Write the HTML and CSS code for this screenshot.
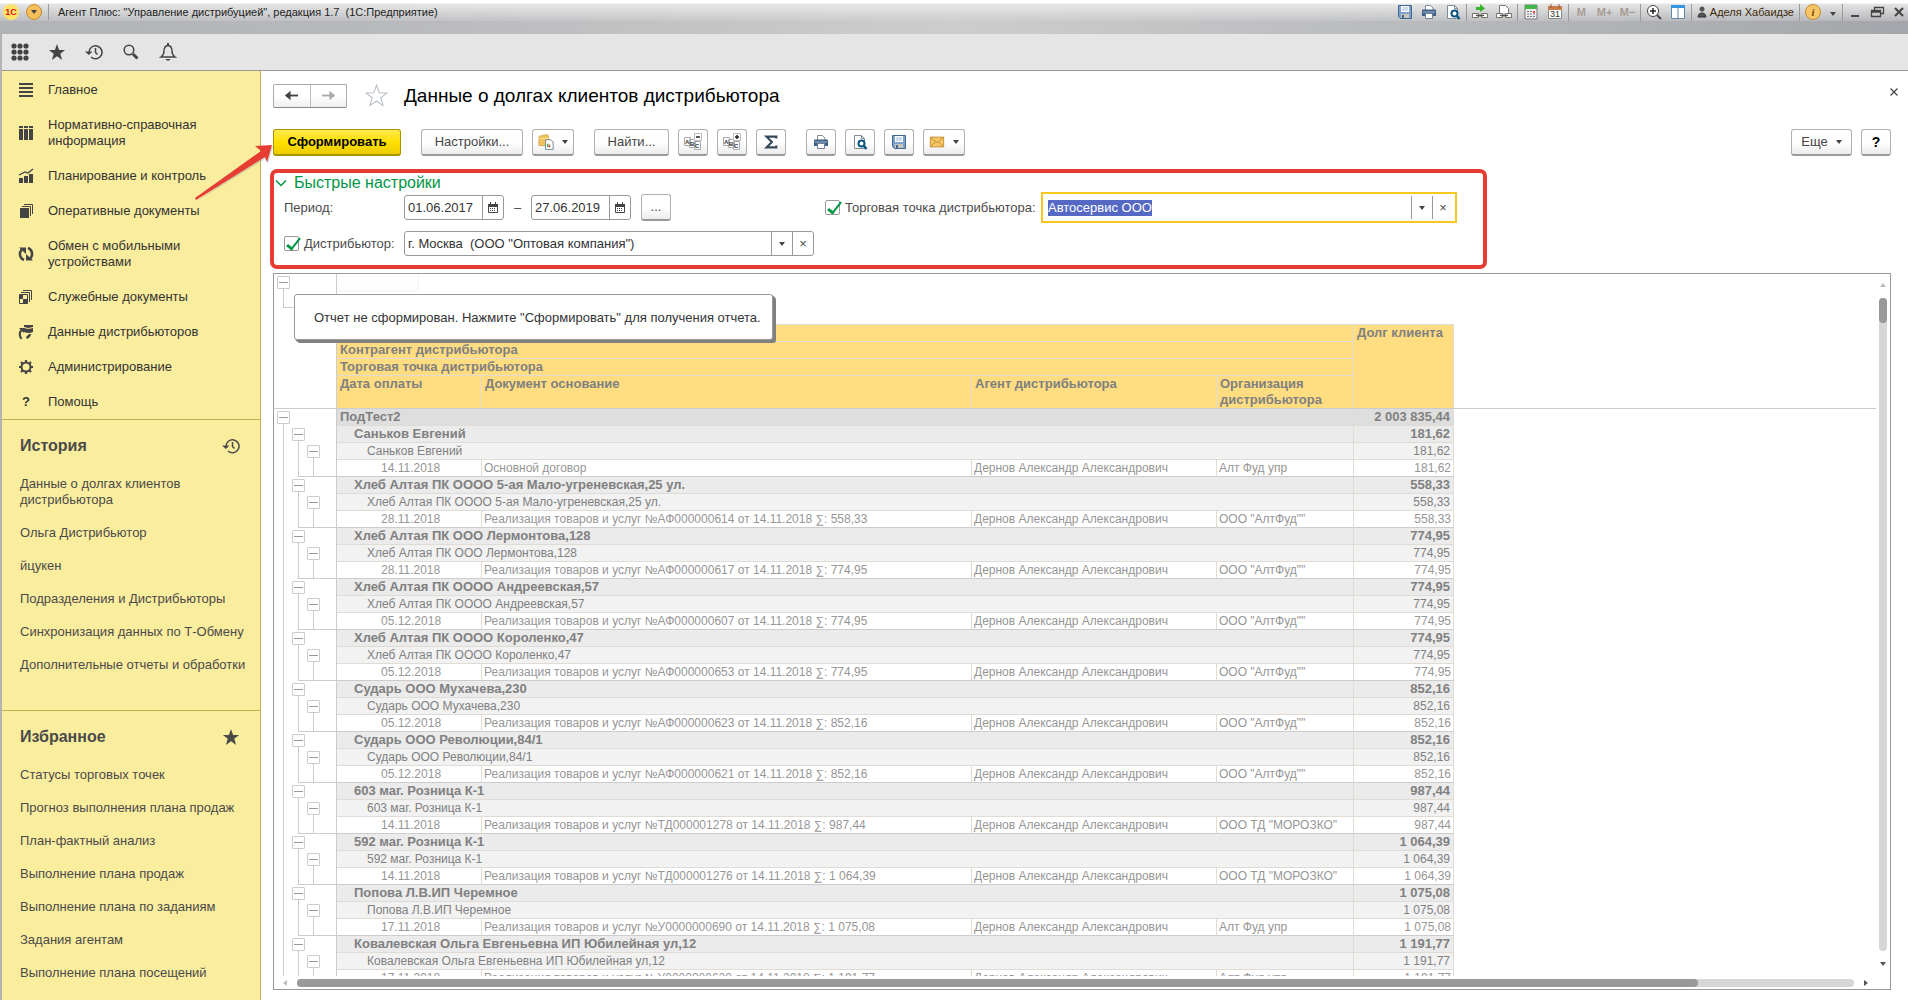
FILE: index.html
```
<!DOCTYPE html>
<html lang="ru">
<head>
  <meta charset="UTF-8">
  <title>Агент Плюс: Управление дистрибуцией</title>
  <link rel="stylesheet" href="styles.css">
</head>
<body>
  <!-- Shared icons -->
  <svg class="sprite" width="0" height="0" aria-hidden="true">
    <symbol id="i-save" viewBox="0 0 16 16">
      <path d="M1.500 1.500h13v13h-11l-2-2z" fill="#7da3cc" stroke="#3f6791"/>
      <path d="M4 2h8v6H4z" fill="#fff"/><path d="M5 4h6M5 6h6" stroke="#9db7d2"/>
      <path d="M4 10h8v4H4z" fill="#c9c5bd"/><path d="M5 11h2v3H5z" fill="#3f6791"/>
    </symbol>
    <symbol id="i-print" viewBox="0 0 16 16">
      <path d="M4.500 7V1.500h5l2.500 2.500v3" fill="#fff" stroke="#7f8b97"/>
      <path d="M1 6.500q0-1 1-1h12q1 0 1 1V12H1z" fill="#3f6286"/>
      <path d="M2 8h12" stroke="#9fb6cc"/>
      <path d="M4.500 9.500h7v5h-7z" fill="#fff" stroke="#6d8199"/>
    </symbol>
    <symbol id="i-preview" viewBox="0 0 16 16">
      <path d="M2.500 1.500h7l3 3v10h-10z" fill="#fff" stroke="#7f8b97"/><path d="M9.500 1.500v3h3" fill="none" stroke="#7f8b97"/>
      <circle cx="9.500" cy="9.500" r="3" fill="#fff" stroke="#0d5480" stroke-width="2"/>
      <path d="M11.500 11.500l3 3.500" stroke="#0d5480" stroke-width="2.500"/>
    </symbol>
    <symbol id="i-link" viewBox="0 0 16 16">
      <path d="M.5 9.500h6v4h-6zM9.500 9.500h6v4h-6z" fill="#fff" stroke="#77736f"/>
      <path d="M4 11.500h8" stroke="#55514d" stroke-width="1.500"/>
    </symbol>
    <symbol id="i-history" viewBox="0 0 18 18">
      <path d="M4 9.500a6.500 6.500 0 1 1 2 4.500" fill="none" stroke="currentColor" stroke-width="1.500"/>
      <path d="M0 8.500h7.500L3.800 12z" fill="currentColor"/>
      <path d="M10.500 5v4.500l2 2" fill="none" stroke="currentColor" stroke-width="1.500"/>
    </symbol>
    <symbol id="i-star" viewBox="0 0 18 18">
      <path d="M9 1l2.100 5.900 6 .2-4.800 3.700 1.800 6.100L9 13.300l-5.100 3.600 1.800-6.100L.9 7.100l6-.2z"/>
    </symbol>
    <symbol id="i-cal" viewBox="0 0 12 12">
      <path d="M1.500 2.500h9v8h-9z" fill="none" stroke="#444"/><path d="M1 2h10v3H1zM3 0h1v3H3zM8 0h1v3H8z" fill="#444"/>
      <path d="M3 6.500h6M3 8.500h6" stroke="#444" stroke-dasharray="1 1"/>
    </symbol>
    <symbol id="i-pages" viewBox="0 0 18 18">
      <path d="M.5 4.500h6v8h-6zM5.500 6.500h6v8h-6zM10.500 8.500h6v8h-6z" fill="#fff" stroke="#aaa"/>
      <path d="M10.500.5h7v7h-7z" fill="#fff" stroke="#bbb"/>
    </symbol>
  </svg>

  <header class="titlebar">
    <span class="logo">1С</span>
    <button class="app-menu" aria-label="Меню"><i class="caret"></i></button>
    <span class="title-text">Агент Плюс: "Управление дистрибуцией", редакция 1.7&nbsp; (1С:Предприятие)</span>
    <nav class="title-tools">
      <button aria-label="Сохранить"><svg><use href="#i-save"/></svg></button>
      <button aria-label="Печать"><svg><use href="#i-print"/></svg></button>
      <button aria-label="Просмотр"><svg><use href="#i-preview"/></svg></button>
      <i class="sep"></i>
      <button aria-label="Получить ссылку"><svg viewBox="0 0 16 16"><use href="#i-link" width="16" height="16"/><path d="M4 3h4V0l5 4.500L8 8V6H4z" fill="#35b52a"/></svg></button>
      <button aria-label="Перейти по ссылке"><svg viewBox="0 0 16 16"><path d="M3.500 9V1.500h6l3 3V9" fill="#fff" stroke="#777"/><use href="#i-link" width="16" height="16"/></svg></button>
      <i class="sep"></i>
      <button aria-label="Калькулятор"><svg viewBox="0 0 16 16"><path d="M2 1h12v14H2z" fill="#eee" stroke="#777"/><path d="M2 1h12v4H2z" fill="#42b649"/><path d="M4 7.500h8M4 10h8M4 12.500h8" stroke="#777" stroke-dasharray="2 1"/><path d="M10 7h2v2h-2z" fill="#e44"/></svg></button>
      <button aria-label="Календарь"><svg viewBox="0 0 16 16"><path d="M1.500 2.500h13v12h-13z" fill="#fff" stroke="#888"/><path d="M1 2h14v4H1z" fill="#c87c4c"/><path d="M4 0v4M12 0v4" stroke="#8c5a3c"/><text x="3" y="13" font-family="Liberation Sans" font-size="9" fill="#333">31</text></svg></button>
      <i class="sep"></i>
      <button class="mem" disabled>M</button>
      <button class="mem" disabled>M+</button>
      <button class="mem" disabled>M−</button>
      <i class="sep"></i>
      <button aria-label="Масштаб"><svg viewBox="0 0 16 16"><circle cx="7" cy="7" r="5.500" fill="#fff" stroke="#444"/><path d="M7 4v6M4 7h6" stroke="#222" stroke-width="1.500"/><path d="M11 11l4 4" stroke="#444" stroke-width="2"/></svg></button>
      <button aria-label="Панели"><svg viewBox="0 0 16 16"><path d="M1.500 1.500h13v13h-13z" fill="#fff" stroke="#5e87a8"/><path d="M1 1h14v3H1z" fill="#3395e0"/><path d="M8 4v11" stroke="#5e87a8"/></svg></button>
      <i class="sep"></i>
      <span class="user"><svg viewBox="0 0 10 12"><circle cx="5" cy="3" r="2.500" fill="#555"/><path d="M1 11q0-3 3-4h2q3 1 3 4z" fill="#555" stroke="#333"/></svg>Аделя Хабаидзе</span>
      <i class="sep"></i>
      <button class="info" aria-label="О программе">i</button>
      <button class="win arrow" aria-label="Ещё"><i class="caret"></i></button>
      <i class="sep"></i>
      <button class="win" aria-label="Свернуть"><svg viewBox="0 0 16 16"><path d="M4 12h8" stroke="#444" stroke-width="2"/></svg></button>
      <button class="win" aria-label="Восстановить"><svg viewBox="0 0 16 16"><path d="M5.500 6V3.500h9v6H12M2.500 6.500h9v6h-9zM2 8h10" fill="none" stroke="#444" stroke-width="1.300"/></svg></button>
      <button class="win" aria-label="Закрыть"><svg viewBox="0 0 16 16"><path d="M4 4l8 8M12 4l-8 8" stroke="#444" stroke-width="2"/></svg></button>
    </nav>
  </header>

  <div class="window">
    <div class="topbar">
      <button aria-label="Разделы"><svg viewBox="0 0 18 18" fill="#444"><circle cx="3" cy="3" r="2.600"/><circle cx="9" cy="3" r="2.600"/><circle cx="15" cy="3" r="2.600"/><circle cx="3" cy="9" r="2.600"/><circle cx="9" cy="9" r="2.600"/><circle cx="15" cy="9" r="2.600"/><circle cx="3" cy="15" r="2.600"/><circle cx="9" cy="15" r="2.600"/><circle cx="15" cy="15" r="2.600"/></svg></button>
      <button aria-label="Избранное"><svg fill="#444"><use href="#i-star"/></svg></button>
      <button aria-label="История"><svg><use href="#i-history"/></svg></button>
      <button aria-label="Поиск"><svg viewBox="0 0 18 18"><circle cx="7" cy="7" r="4.800" fill="none" stroke="#444" stroke-width="1.500"/><path d="M11 11l4.500 4.500" stroke="#444" stroke-width="3"/></svg></button>
      <button aria-label="Оповещения"><svg viewBox="0 0 18 18"><path d="M2 14h14q-3-2-3-6 0-5-4-5.500Q5 3 5 8q0 4-3 6z" fill="none" stroke="#444" stroke-width="1.400"/><path d="M9 0v3" stroke="#444" stroke-width="2"/><path d="M6.500 16h5l-1 1.500h-3z" fill="#444"/></svg></button>
    </div>

    <div class="workspace">
      <aside class="sidebar">
        <nav class="sections">
          <a href="#"><svg viewBox="0 0 16 16"><path d="M1 2h14M1 6h14M1 10h14M1 14h14" stroke="#444" stroke-width="2"/></svg>Главное</a>
          <a href="#"><svg viewBox="0 0 16 16"><path d="M1 1h4v2H1zM6 1h4v2H6zM11 1h4v2h-4zM1 4h4v11H1zM6 4h4v11H6zM11 4h4v11h-4z" fill="#444"/></svg>Нормативно-справочная информация</a>
          <a href="#"><svg viewBox="0 0 16 16"><path d="M1 10h4v5H1zM6 8h4v7H6zM11 6h4v9h-4z" fill="#444"/><path d="M1 7l6-3 3 1 5-4" fill="none" stroke="#444" stroke-width="1.300"/></svg>Планирование и контроль</a>
          <a href="#"><svg viewBox="0 0 16 16"><path d="M2 5h9v10H2z" fill="#444"/><path d="M4 3.500h8.500V13M6 1.500h8.500V11" fill="none" stroke="#444"/></svg>Оперативные документы</a>
          <a href="#"><svg viewBox="0 0 16 16"><path d="M6 14Q1.500 12 2 7q.3-2 2-3.500M10 2q4.500 2 4 7-.3 2-2 3.500" fill="none" stroke="#444" stroke-width="2.500"/><path d="M1 1.500h7V8zM15 14.500H8V8z" fill="#444"/></svg>Обмен с мобильными устройствами</a>
          <a href="#"><svg viewBox="0 0 16 16"><path d="M1.500 5.500h8v9h-8z" fill="none" stroke="#444"/><path d="M2 6h3v4H2zM5 10h4v4H5z" fill="#444"/><path d="M3 3.500h8.500V13M5 1.500h8.500V11" fill="none" stroke="#444"/></svg>Служебные документы</a>
          <a href="#"><svg viewBox="0 0 16 16"><path d="M6 1h9v7q-4 2-9 0z" fill="#444"/><path d="M6 3.500q4 2 9 0" fill="none" stroke="#fbed9e"/><path d="M3.500 15Q0 10 3.500 6" fill="none" stroke="#444" stroke-width="2"/><path d="M1 4h5v5zM13 10q0 3-4 5l-1-2 3-3z" fill="#444"/></svg>Данные дистрибьюторов</a>
          <a href="#"><svg viewBox="0 0 16 16"><circle cx="8" cy="8" r="4.500" fill="none" stroke="#444" stroke-width="2"/><path d="M8 1v2M8 13v2M1 8h2M13 8h2M3 3l1.500 1.500M11.500 11.500L13 13M13 3l-1.500 1.500M4.500 11.500L3 13" stroke="#444" stroke-width="2.200"/></svg>Администрирование</a>
          <a href="#"><b class="q">?</b>Помощь</a>
        </nav>
        <section class="side-block history">
          <h2>История <svg><use href="#i-history"/></svg></h2>
          <a href="#">Данные о долгах клиентов дистрибьютора</a>
          <a href="#">Ольга Дистрибьютор</a>
          <a href="#">йцукен</a>
          <a href="#">Подразделения и Дистрибьюторы</a>
          <a href="#">Синхронизация данных по Т-Обмену</a>
          <a href="#">Дополнительные отчеты и обработки</a>
        </section>
        <section class="side-block">
          <h2>Избранное <svg fill="#4a4a4a"><use href="#i-star"/></svg></h2>
          <a href="#">Статусы торговых точек</a>
          <a href="#">Прогноз выполнения плана продаж</a>
          <a href="#">План-фактный анализ</a>
          <a href="#">Выполнение плана продаж</a>
          <a href="#">Выполнение плана по заданиям</a>
          <a href="#">Задания агентам</a>
          <a href="#">Выполнение плана посещений</a>
        </section>
      </aside>

      <main>
        <div class="form-head">
          <div class="nav-btns">
            <button aria-label="Назад"><svg viewBox="0 0 16 16"><path d="M2 8h13" stroke="#444" stroke-width="2"/><path d="M1 8l6-5v10z" fill="#444"/></svg></button>
            <button aria-label="Вперед"><svg viewBox="0 0 16 16"><path d="M1 8h13" stroke="#aaa" stroke-width="2"/><path d="M15 8L9 3v10z" fill="#aaa"/></svg></button>
          </div>
          <button class="fav" aria-label="В избранное"><svg viewBox="0 0 18 18" fill="#fff" stroke="#b4bac2" stroke-width=".8"><use href="#i-star"/></svg></button>
          <h1>Данные о долгах клиентов дистрибьютора</h1>
          <button class="close" aria-label="Закрыть"><svg viewBox="0 0 10 10"><path d="M1.500 1.500l7 7M8.500 1.500l-7 7" stroke="#444" stroke-width="1.200"/></svg></button>
        </div>

        <div class="commands">
          <button class="btn primary">Сформировать</button>
          <button class="btn text-btn first">Настройки...</button>
          <button class="btn drop" aria-label="Варианты"><svg viewBox="0 0 18 18"><path d="M1 4q0-2 2-2h2l1-1h5l1 2v10H1z" fill="#f0c25c" stroke="#c99b3c" stroke-width=".8"/><path d="M1 5h11" stroke="#fae3a4"/><path d="M8.500 6.500h6l2.500 2.500v8.500H8.500z" fill="#fff" stroke="#6c8094"/><path d="M11 11v4" stroke="#3a3" stroke-width="1.500"/><path d="M13 12v3" stroke="#d33" stroke-width="1.500"/></svg><i class="caret"></i></button>
          <button class="btn text-btn find first">Найти...</button>
          <button class="btn icon abc" aria-label="Свернуть группы"><svg viewBox="0 0 18 18"><use href="#i-pages" width="18" height="18"/><text x="1" y="11">A</text><text x="6" y="13">B</text><text x="11" y="15">C</text><path d="M12 4h4" stroke="#222" stroke-width="1.500"/></svg></button>
          <button class="btn icon abc" aria-label="Развернуть группы"><svg viewBox="0 0 18 18"><use href="#i-pages" width="18" height="18"/><text x="1" y="11">A</text><text x="6" y="13">B</text><text x="11" y="15">C</text><path d="M12 4h4M14 2v4" stroke="#222" stroke-width="1.500"/></svg></button>
          <button class="btn icon" aria-label="Сумма"><svg viewBox="0 0 18 18"><path d="M15 5V3H4l6 6-6 6h11v-2" fill="none" stroke="#34495a" stroke-width="2.400"/></svg></button>
          <button class="btn icon first" aria-label="Печать"><svg><use href="#i-print"/></svg></button>
          <button class="btn icon" aria-label="Предварительный просмотр"><svg><use href="#i-preview"/></svg></button>
          <button class="btn icon" aria-label="Сохранить"><svg><use href="#i-save"/></svg></button>
          <button class="btn drop" aria-label="Отправить"><svg viewBox="0 0 18 18"><path d="M1.500 3.500h15v11h-15z" fill="#f6c765" stroke="#bf862b"/><path d="M2 4l7 6 7-6M2 14l5-5M16 14l-5-5" fill="none" stroke="#bf862b"/></svg><i class="caret"></i></button>
          <button class="btn more">Еще <i class="caret"></i></button>
          <button class="btn icon help">?</button>
        </div>

        <section class="quick">
          <h3><svg viewBox="0 0 12 8"><path d="M1 1.500l5 5 5-5" fill="none" stroke="#009646" stroke-width="1.500"/></svg>Быстрые настройки</h3>
          <div class="quick-grid">
            <div class="field">
              <label class="l-name" for="from">Период:</label>
              <span class="input date"><input type="text" id="from" value="01.06.2017"><button aria-label="Выбрать дату"><svg><use href="#i-cal"/></svg></button></span>
              <span class="dash">–</span>
              <span class="input date"><input type="text" aria-label="Конец периода" value="27.06.2019"><button aria-label="Выбрать дату"><svg><use href="#i-cal"/></svg></button></span>
              <button class="btn icon dots">...</button>
            </div>
            <div class="field">
              <span class="l-point"><input type="checkbox" id="use-point" checked><label for="use-point">Торговая точка дистрибьютора:</label></span>
              <span class="input focus"><input type="text" id="point" aria-label="Торговая точка" value="Автосервис ООО"><button aria-label="Список"><i class="caret"></i></button><button aria-label="Очистить">×</button></span>
            </div>
            <div class="field">
              <span class="l-name"><input type="checkbox" id="use-dist" checked><label for="use-dist">Дистрибьютор:</label></span>
              <span class="input wide"><input type="text" aria-label="Дистрибьютор" value="г. Москва  (ООО &quot;Оптовая компания&quot;)"><button aria-label="Список"><i class="caret"></i></button><button aria-label="Очистить">×</button></span>
            </div>
          </div>
        </section>

        <section class="report">
          <div class="sheet">
            <table>
              <colgroup>
                <col class="c-tree"><col class="c-date"><col class="c-doc"><col class="c-agent"><col class="c-org"><col class="c-sum"><col>
              </colgroup>
              <thead>
                <tr class="spacer"><td class="tree"><div class="tree-in"><span class="lv open"><button aria-label="Свернуть"></button></span></div></td><td colspan="5"><div class="blank-cell"></div></td><td></td></tr>
                <tr class="h"><td class="tree" rowspan="4"></td><th class="top" colspan="4">&nbsp;</th><th class="top sum-h" rowspan="4">Долг клиента</th><td class="rest" rowspan="4"></td></tr>
                <tr class="h"><th colspan="4">Контрагент дистрибьютора</th></tr>
                <tr class="h"><th colspan="4">Торговая точка дистрибьютора</th></tr>
                <tr class="h last"><th>Дата оплаты</th><th>Документ основание</th><th>Агент дистрибьютора</th><th>Организация дистрибьютора</th></tr>
              </thead>
              <tbody id="rows"></tbody>
            </table>
          </div>
          <div class="vbar"><i class="up"></i><div class="track"><div class="thumb"></div></div><i class="down"></i></div>
          <div class="hbar"><i class="left"></i><div class="track"><div class="thumb"></div></div><i class="right"></i></div>
          <div class="message">Отчет не сформирован. Нажмите "Сформировать" для получения отчета.</div>
        </section>
      </main>

      <!-- Pointer to the main button -->
      <svg class="pointer" viewBox="0 0 82 64"><path d="M5 60L73 18l3 5 5-18z" fill="#999" opacity=".4"/><path d="M3 57L69 10l-6-5 17-1-5 17-2-5L4 59z" fill="#e63c32"/></svg>
    </div>
  </div>

  <script>
    // name, date, document, organization, amount
    const agent = 'Дернов Александр Александрович';
    const sale = (num, sum) => 'Реализация товаров и услуг №' + num + ' от 14.11.2018 ∑: ' + sum;
    const groups = [
      ['Саньков Евгений', '14.11.2018', 'Основной договор', 'Алт Фуд упр', '181,62'],
      ['Хлеб Алтая ПК ОООО 5-ая Мало-угреневская,25 ул.', '28.11.2018', sale('АФ000000614', '558,33'), 'ООО "АлтФуд""', '558,33'],
      ['Хлеб Алтая ПК ООО Лермонтова,128', '28.11.2018', sale('АФ000000617', '774,95'), 'ООО "АлтФуд""', '774,95'],
      ['Хлеб Алтая ПК ОООО Андреевская,57', '05.12.2018', sale('АФ000000607', '774,95'), 'ООО "АлтФуд""', '774,95'],
      ['Хлеб Алтая ПК ОООО Короленко,47', '05.12.2018', sale('АФ000000653', '774,95'), 'ООО "АлтФуд""', '774,95'],
      ['Сударь ООО Мухачева,230', '05.12.2018', sale('АФ000000623', '852,16'), 'ООО "АлтФуд""', '852,16'],
      ['Сударь ООО Революции,84/1', '05.12.2018', sale('АФ000000621', '852,16'), 'ООО "АлтФуд""', '852,16'],
      ['603 маг. Розница К-1', '14.11.2018', sale('ТД000001278', '987,44'), 'ООО ТД "МОРОЗКО"', '987,44'],
      ['592 маг. Розница К-1', '14.11.2018', sale('ТД000001276', '1 064,39'), 'ООО ТД "МОРОЗКО"', '1 064,39'],
      ['Попова Л.В.ИП Черемное', '17.11.2018', sale('У0000000690', '1 075,08'), 'Алт Фуд упр', '1 075,08'],
      ['Ковалевская Ольга Евгеньевна ИП Юбилейная ул,12', '17.11.2018', sale('У0000000620', '1 191,77'), 'Алт Фуд упр', '1 191,77']
    ];

    const open = '<span class="lv open"><button aria-label="Свернуть"></button></span>';
    const line = '<span class="lv line"></span>';
    const tree = cells => '<td class="tree"><div class="tree-in">' + cells + '</div></td>';

    let html = '<tr class="total">' + tree(open) + '<td colspan="4">ПодТест2</td><td class="num">2 003 835,44</td><td class="rest"></td></tr>';
    groups.forEach(([name, date, doc, org, sum]) => {
      const num = '<td class="num">' + sum + '</td><td class="rest"></td></tr>';
      html += '<tr class="group">' + tree(line + open) + '<td colspan="4">' + name + '</td>' + num;
      html += '<tr class="sub">' + tree(line + line + open) + '<td colspan="4">' + name + '</td>' + num;
      html += '<tr class="row">' + tree(line + '<span class="lv line end"></span>' + line) +
        '<td class="date">' + date + '</td><td>' + doc + '</td><td>' + agent + '</td><td>' + org + '</td>' + num;
    });
    document.getElementById('rows').innerHTML = html;

    const point = document.getElementById('point');
    point.focus();
    point.select();
  </script>
</body>
</html>
```
FILE: styles.css
```
* {
  box-sizing: border-box;
}
body {
  margin: 0;
  height: 100vh;
  display: flex;
  flex-direction: column;
  overflow: hidden;
  background: linear-gradient(90deg, #b2b3b7, #b8b9bb 20%, #cdcdcd 50%, #bcbdbf 70%, #a5a6ab);
  color: #333;
  font: 13px/16px "Liberation Sans", Arial, sans-serif;
}
button {
  margin: 0;
  padding: 0;
  border: none;
  background: none;
  color: inherit;
  font: inherit;
}
a {
  color: inherit;
  text-decoration: none;
}
h1, h2, h3 {
  margin: 0;
}
svg {
  display: block;
  flex: none;
}
.sprite {
  position: absolute;
}
.caret {
  display: inline-block;
  border: 3px solid transparent;
  border-top: 4px solid #444;
  border-bottom: none;
}

/* Title bar */
.titlebar {
  display: flex;
  align-items: center;
  height: 21px;
  margin-bottom: 13px;
  padding: 3px 2px 0 3px;
  background: linear-gradient(#fff, #fff 3px, rgba(235, 235, 235, 0.9) 4px, rgba(205, 206, 208, 0.4));
  color: #222;
  font-size: 11px;
}
.logo {
  width: 16px;
  height: 16px;
  border-radius: 50%;
  background: #fbe36a;
  color: #d6161c;
  font: bold 9px/16px "Liberation Sans", sans-serif;
  text-align: center;
}
.app-menu {
  display: flex;
  align-items: center;
  justify-content: center;
  width: 16px;
  height: 16px;
  margin: 0 6px 0 7px;
  border: 1px solid #c48b2e;
  border-radius: 50%;
  background: #f7c05c;
}
.title-text {
  padding-left: 9px;
  border-left: 1px solid #999;
}
.title-tools {
  display: flex;
  align-items: center;
  gap: 8px;
  margin-left: auto;
}
.title-tools svg {
  width: 16px;
  height: 16px;
}
.sep {
  width: 1px;
  height: 17px;
  margin: 0 -3px;
  background: #999;
}
.title-tools .mem {
  width: 15px;
  color: #a89c96;
  font-weight: bold;
}
.user {
  display: flex;
  align-items: center;
  gap: 3px;
  color: #3c2a08;
}
.title-tools .user svg {
  width: 10px;
  height: 12px;
}
.info {
  width: 16px;
  height: 16px;
  border: 1px solid #c48b2e;
  border-radius: 50%;
  background: #f6c668;
  color: #7a4d00;
  font: italic bold 11px/14px "Liberation Serif", serif;
}
.title-tools .win {
  display: flex;
  justify-content: center;
  width: 14px;
}
.title-tools .arrow {
  width: 8px;
  padding-top: 4px;
}

/* Window frame */
.window {
  flex: 1;
  min-height: 0;
  display: flex;
  flex-direction: column;
  margin-left: 2px;
}
.topbar {
  display: flex;
  align-items: center;
  gap: 19px;
  height: 37px;
  padding-left: 9px;
  border-bottom: 1px solid #999;
  background: #e5e5e5;
  color: #444;
}
.topbar svg {
  width: 18px;
  height: 18px;
}
.workspace {
  position: relative;
  flex: 1;
  min-height: 0;
  display: flex;
  background: #fff;
}

/* Sidebar */
.sidebar {
  flex: none;
  width: 259px;
  border-right: 1px solid #bfae52;
  background: #fbed9e;
  overflow: hidden;
}
.sections {
  display: flex;
  flex-direction: column;
  gap: 19px;
  padding: 11px 40px 9px 16px;
  border-bottom: 1px solid #bfae52;
}
.sections a {
  display: flex;
  align-items: center;
  gap: 14px;
}
.sections svg,
.q {
  width: 16px;
  height: 16px;
  text-align: center;
}
.side-block {
  display: flex;
  flex-direction: column;
  gap: 17px;
  padding: 16px 18px;
  color: #4a4a4a;
}
.history {
  height: 291px;
  border-bottom: 1px solid #bfae52;
}
.side-block h2 {
  display: flex;
  justify-content: space-between;
  align-items: center;
  height: 20px;
  margin-bottom: 3px;
  font-size: 16px;
}
.side-block h2 svg {
  width: 18px;
  height: 18px;
  margin-right: 2px;
}
.side-block a {
  margin-right: -10px;
  padding-right: 40px;
}
.side-block a:nth-of-type(n+2) {
  padding-right: 0;
  white-space: nowrap;
}

/* Report form */
main {
  flex: 1;
  min-width: 0;
  display: flex;
  flex-direction: column;
  padding: 12px 17px 10px 12px;
}
.form-head {
  display: flex;
  align-items: center;
  height: 25px;
  color: #000;
}
.nav-btns {
  display: flex;
  border: 1px solid #aaa;
  border-bottom-color: #888;
  border-radius: 2px;
  background: linear-gradient(#fff, #fff 50%, #efefef);
}
.nav-btns button {
  width: 36px;
  height: 22px;
  padding: 3px 10px;
}
.nav-btns button + button {
  border-left: 1px solid #bbb;
}
.nav-btns svg {
  width: 15px;
  height: 15px;
}
.fav {
  margin: 0 16px 0 18px;
}
.fav svg {
  width: 23px;
  height: 23px;
}
.form-head h1 {
  font-size: 19px;
  font-weight: normal;
}
.close {
  margin: -8px -8px 0 auto;
}
.close svg {
  width: 10px;
  height: 10px;
}
.commands {
  display: flex;
  gap: 9px;
  margin: 21px 0 13px;
}
.btn {
  display: flex;
  align-items: center;
  justify-content: center;
  height: 27px;
  border: 1px solid #b0b0b0;
  border-bottom: 2px solid #999;
  border-radius: 3px;
  background: linear-gradient(#fff, #fff 50%, #ececec);
  color: #444;
}
.btn svg {
  width: 16px;
  height: 16px;
}
.btn.abc svg {
  width: 18px;
  height: 18px;
}
.abc text {
  fill: #333;
  font-size: 6px;
  font-weight: bold;
}
.primary {
  width: 128px;
  border-color: #a89400;
  background: linear-gradient(#ffea4d, #ffe000 50%, #eccc00);
  color: #000;
  font-weight: bold;
}
.text-btn {
  width: 102px;
}
.find {
  width: 75px;
}
.first {
  margin-left: 11px;
}
.icon {
  width: 30px;
}
.drop {
  gap: 8px;
  width: 42px;
}
.more {
  gap: 8px;
  width: 61px;
  margin-left: auto;
}
.help {
  color: #000;
  font-size: 14px;
  font-weight: bold;
}

/* Quick settings */
.quick {
  align-self: flex-start;
  margin: 0 0 4px -3px;
  padding: 0 26px 9px 0;
  border: 4px solid #e63c32;
  border-radius: 7px;
}
.quick h3 {
  display: flex;
  align-items: center;
  gap: 7px;
  height: 19px;
  padding-left: 1px;
  color: #009646;
  font-size: 16px;
  font-weight: normal;
}
.quick h3 svg {
  width: 12px;
  height: 8px;
}
.quick-grid {
  display: grid;
  grid-template-columns: auto auto;
  gap: 8px 11px;
  padding-left: 10px;
}
.field {
  display: flex;
  align-items: center;
  color: #4a4a4a;
}
.l-name {
  display: flex;
  width: 120px;
  gap: 5px;
}
.l-point {
  display: flex;
  width: 216px;
  gap: 5px;
}
.dash {
  width: 27px;
  text-align: center;
}
.dots {
  margin-left: 10px;
}
.input {
  display: flex;
  width: 100px;
  height: 25px;
  border: 1px solid #999;
  border-radius: 3px;
  background: #fff;
}
.wide {
  width: 410px;
}
.focus {
  width: 416px;
  height: 31px;
  padding: 2px;
  border: 2px solid #f8c820;
  border-radius: 0;
}
.input input {
  flex: 1;
  min-width: 0;
  padding: 0 3px;
  border: none;
  outline: none;
  background: none;
  color: #333;
  font: inherit;
}
.input input::selection {
  background: #5468c4;
  color: #fff;
}
.input button {
  display: flex;
  align-items: center;
  justify-content: center;
  width: 21px;
  border-left: 1px solid #999;
}
.input svg {
  width: 12px;
  height: 12px;
}
input[type="checkbox"] {
  appearance: none;
  position: relative;
  width: 15px;
  height: 15px;
  margin: 0;
  border: 1px solid #999;
  border-radius: 2px;
}
input[type="checkbox"]:checked::after {
  content: "";
  position: absolute;
  left: 5px;
  top: -2px;
  width: 5px;
  height: 12px;
  border: solid #009646;
  border-width: 0 2px 3px 0;
  transform: rotate(38deg);
}

/* Report sheet */
.report {
  position: relative;
  flex: 1;
  min-height: 0;
  display: grid;
  grid-template-columns: 1fr 14px;
  grid-template-rows: 1fr 13px;
  border: 1px solid #999;
}
.sheet {
  overflow: hidden;
}
table {
  width: 100%;
  table-layout: fixed;
  border-collapse: separate;
  border-spacing: 0;
  color: #808080;
}
.c-tree { width: 63px; }
.c-date { width: 145px; }
.c-doc { width: 490px; }
.c-agent { width: 245px; }
.c-org { width: 137px; }
.c-sum { width: 100px; }
td,
th {
  height: 17px;
  padding: 0 3px;
  border: solid #e0dcd4;
  border-width: 0 1px 1px 0;
  line-height: 16px;
  text-align: left;
  vertical-align: top;
  white-space: nowrap;
}
.spacer td {
  height: 50px;
  padding: 0;
  border: none;
}
.blank-cell {
  width: 82px;
  height: 18px;
  border: solid #f8f8f8;
  border-width: 0 2px 2px 0;
  background: #fdfdfd;
}
th {
  background: #ffdd80;
  font-weight: bold;
}
th.top {
  border-top: 1px solid #dcdcdc;
}
.last th {
  height: 33px;
  white-space: normal;
}
.last th,
th.sum-h {
  border-bottom-color: #ccc;
}
thead td.rest {
  border: none;
  border-bottom: 1px solid #ccc;
}
tbody td.rest {
  border: none;
}
td.tree,
.spacer td.tree {
  padding: 0;
  border: none;
  border-right: 1px solid #ccc;
}
.h td.tree {
  border-bottom: 1px solid #ccc;
}
.total td {
  background: #dedede;
  font-weight: bold;
}
.group td {
  background: #ebebeb;
  font-weight: bold;
}
.sub td {
  background: #f2f2f2;
  font-size: 12px;
}
.row td {
  padding: 0 2px;
  border-bottom-color: #ccc;
  color: #969696;
  font-size: 12px;
}
.row td.tree {
  padding: 0;
}
tbody td.tree,
tbody td.rest {
  background: #fff;
}
.group td:nth-child(2) {
  padding-left: 17px;
}
.sub td:nth-child(2) {
  padding-left: 30px;
}
.row td.date {
  padding-left: 44px;
}
td.num {
  text-align: right;
}

/* Grouping tree */
.tree-in {
  display: flex;
  height: 17px;
  padding-left: 2px;
}
.lv {
  position: relative;
  width: 15px;
}
.lv button {
  position: absolute;
  left: 1px;
  top: 2px;
  width: 13px;
  height: 13px;
  border: 1px solid #ccc;
  border-radius: 1px;
  background: linear-gradient(#999, #999) center / 9px 1px no-repeat #fff;
}
.lv::before {
  content: "";
  position: absolute;
  left: 7px;
  top: 0;
  bottom: 0;
  border-left: 1px solid #ccc;
}
.open::before {
  top: 15px;
}
.end::after {
  content: "";
  position: absolute;
  left: 7px;
  bottom: 0;
  width: 38px;
  border-bottom: 1px solid #ccc;
}
.spacer .lv::before {
  bottom: -17px;
  width: 12px;
  border-bottom: 1px solid #ccc;
}

/* Scroll bars */
.vbar,
.hbar {
  display: flex;
  align-items: center;
}
.vbar {
  flex-direction: column;
  gap: 11px;
  padding: 9px 0 10px;
}
.hbar {
  gap: 10px;
  padding: 0 8px 0 9px;
}
.track {
  flex: 1;
  width: 8px;
  border-radius: 4px;
  background: #d6d6d6;
}
.hbar .track {
  height: 8px;
}
.thumb {
  height: 25px;
  border-radius: 4px;
  background: #999;
}
.hbar .thumb {
  width: 90%;
  height: 8px;
}
.up,
.down,
.left,
.right {
  border: 3px solid transparent;
}
.up { border-bottom: 4px solid #bbb; border-top: none; }
.down { border-top: 4px solid #555; border-bottom: none; }
.left { border-right: 4px solid #bbb; border-left: none; }
.right { border-left: 4px solid #555; border-right: none; }

.message {
  position: absolute;
  left: 20px;
  top: 20px;
  padding: 15px 11px 13px 19px;
  border: 1px solid #999;
  border-radius: 3px;
  background: #fff;
  box-shadow: 1px 1px #808080, 2px 2px #808080, 3px 3px #808080;
}
.pointer {
  position: absolute;
  left: 190px;
  top: 70px;
  width: 82px;
  height: 64px;
}
```
